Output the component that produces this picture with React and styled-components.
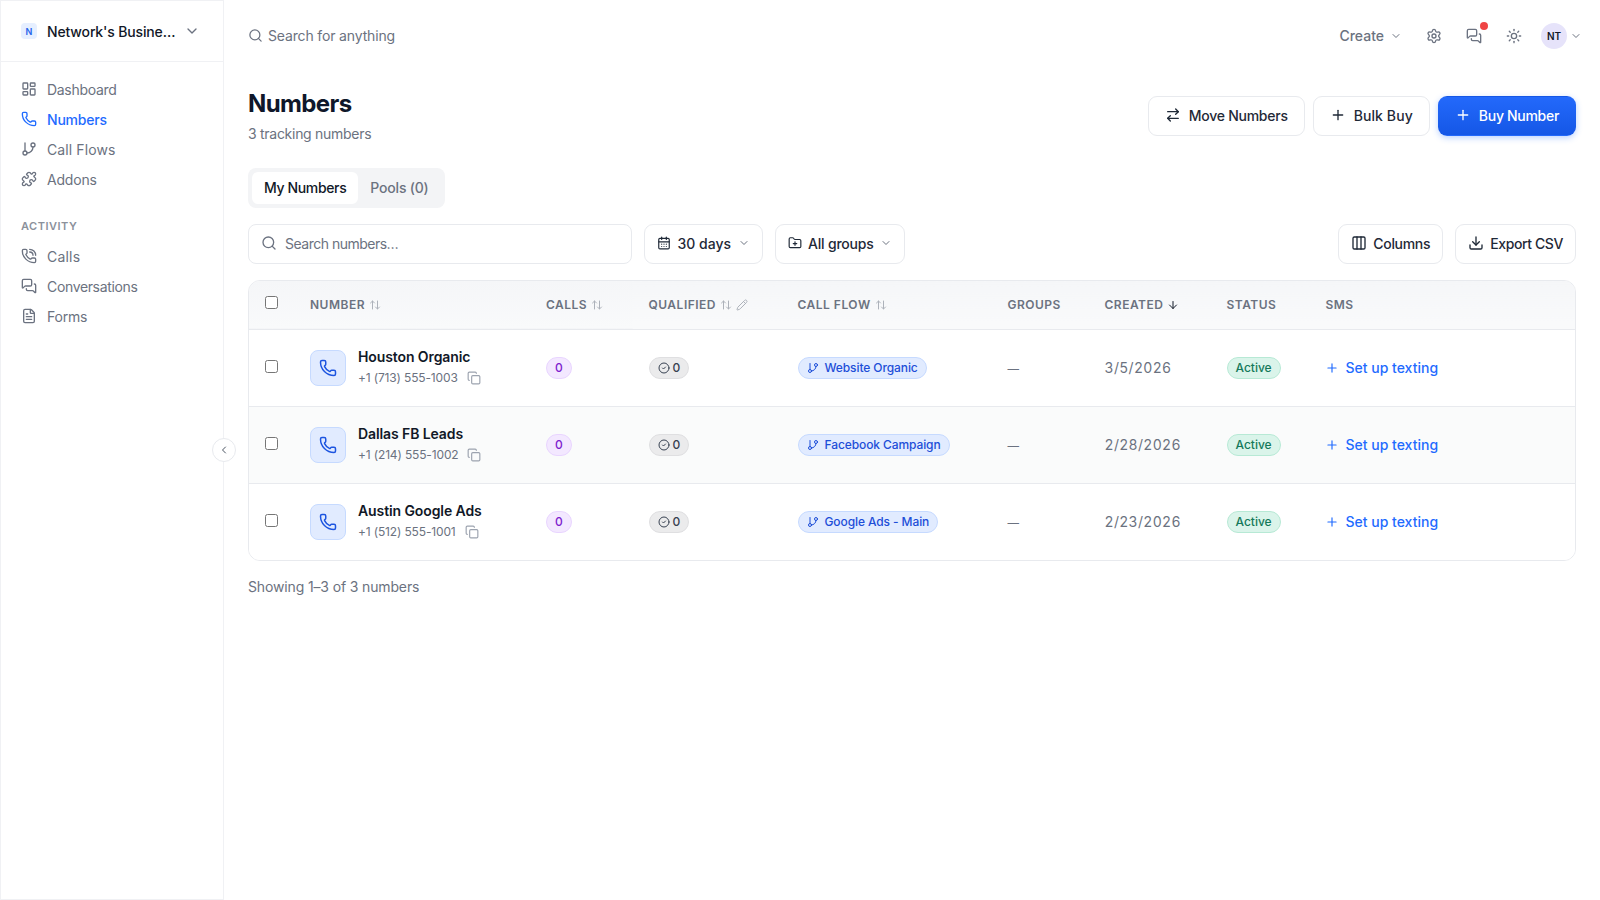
import React from "react";
import styled, { createGlobalStyle } from "styled-components";
import {
  LayoutDashboard, Phone, GitBranch, Puzzle, PhoneCall, MessagesSquare, FileText,
  Search, ChevronDown, ChevronLeft, Settings, Sun, ArrowRightLeft, Plus, CalendarDays,
  FolderPlus, Columns3, Download, ArrowUpDown, ArrowDown, Pencil, Copy, CircleCheck,
} from "lucide-react";

const Global = createGlobalStyle`
  * { box-sizing: border-box; }
  html, body { margin: 0; padding: 0; background: #fff; }
  body { font-family: Inter, "Liberation Sans", sans-serif; color: #111827; }
`;

const Shell = styled.div`
  display: flex;
  height: 900px;
  position: relative;
  overflow: hidden;
`;
const Sidebar = styled.aside`
  width: 224px;
  flex: none;
  border: 1px solid #f0f1f4;
  display: flex;
  flex-direction: column;
  position: relative;
`;
const Workspace = styled.div`
  height: 61px;
  flex: none;
  border-bottom: 1px solid #f0f1f4;
  display: flex;
  align-items: center;
  padding: 0 23px 0 20px;
  gap: 10px;
  color: #6b7280;
`;
const WorkspaceLogo = styled.span`
  width: 16px;
  height: 16px;
  border-radius: 4px;
  background: #e6efff;
  color: #2563eb;
  font-size: 9px;
  font-weight: 600;
  display: flex;
  align-items: center;
  justify-content: center;
  flex: none;
`;
const WorkspaceName = styled.span`
  flex: 1;
  min-width: 0;
  font-size: 14px;
  font-weight: 500;
  letter-spacing: -0.15px;
  color: #111827;
  white-space: nowrap;
`;
const NavGroup = styled.nav`
  display: flex;
  flex-direction: column;
  padding: ${(p) => p.$pad};
`;
const NavItem = styled.a`
  height: 30px;
  display: flex;
  align-items: center;
  gap: 10px;
  font-size: 14px;
  letter-spacing: ${(p) => p.$ls ?? -0.2}px;
  color: ${(p) => (p.$active ? "#1f6bff" : "#6b7280")};
  font-weight: ${(p) => (p.$active ? 500 : 400)};
`;
const NavHeading = styled.div`
  font-size: 11px;
  font-weight: 600;
  letter-spacing: 0.5px;
  color: #8b919b;
  height: 16px;
  line-height: 16px;
  padding: 0 20px;
  margin-top: 24px;
`;
const CollapseButton = styled.button`
  position: absolute;
  left: 211px;
  top: 437px;
  width: 24px;
  height: 24px;
  border-radius: 50%;
  background: #fff;
  border: 1px solid #e8eaee;
  padding: 0;
  display: flex;
  align-items: center;
  justify-content: center;
  color: #4b5563;
`;
const Main = styled.main`
  flex: 1;
  min-width: 0;
  display: flex;
  flex-direction: column;
`;
const Topbar = styled.header`
  height: 71px;
  flex: none;
  display: flex;
  align-items: center;
  justify-content: space-between;
  padding: 0 18px 0 24px;
`;
const GlobalSearch = styled.div`
  display: flex;
  align-items: center;
  gap: 5px;
  font-size: 14px;
  letter-spacing: -0.15px;
  color: #6b7280;
`;
const TopActions = styled.div`
  display: flex;
  align-items: center;
  color: #6b7280;
`;
const CreateMenu = styled.div`
  display: flex;
  align-items: center;
  gap: 6px;
  font-size: 14px;
  font-weight: 500;
  margin-right: 24px;
`;
const IconSlot = styled.span`
  width: 16px;
  height: 16px;
  display: flex;
  margin-right: ${(p) => p.$mr || 24}px;
  position: relative;
`;
const Dot = styled.span`
  position: absolute;
  top: -6px;
  right: -6px;
  width: 8px;
  height: 8px;
  border-radius: 50%;
  background: #ef4444;
`;
const Avatar = styled.span`
  width: 26px;
  height: 26px;
  border-radius: 50%;
  background: #e6e3fa;
  color: #111827;
  font-size: 10px;
  font-weight: 600;
  display: flex;
  align-items: center;
  justify-content: center;
  margin-right: 3px;
  margin-left: 4px;
`;
const Content = styled.div`
  padding: 17px 24px 0;
  display: flex;
  flex-direction: column;
`;
const PageHead = styled.div`
  display: flex;
  align-items: center;
  justify-content: space-between;
`;
const Title = styled.h1`
  margin: 0 0 4px;
  font-size: 24px;
  line-height: 32px;
  font-weight: 700;
  letter-spacing: -0.6px;
  color: #0f172a;
`;
const Subtitle = styled.p`
  margin: 0;
  font-size: 14px;
  line-height: 20px;
  letter-spacing: -0.28px;
  color: #6b7280;
`;
const ButtonRow = styled.div`
  display: flex;
  gap: 8px;
`;
const Button = styled.button`
  height: 40px;
  padding: 0 ${(p) => p.$px || 16}px 2px;
  border-radius: 9px;
  border: 1px solid ${(p) => (p.$primary ? "transparent" : "#e8eaee")};
  background: ${(p) => (p.$primary ? "linear-gradient(#2369fb, #1557e6)" : "#fff")};
  color: ${(p) => (p.$primary ? "#fff" : "#1f2937")};
  box-shadow: ${(p) => (p.$primary ? "0 2px 6px rgba(31,107,255,.3)" : "none")};
  font: 500 14px Inter, sans-serif;
  letter-spacing: ${(p) => p.$ls ?? -0.25}px;
  display: flex;
  align-items: center;
  gap: ${(p) => p.$gap || 8}px;
  white-space: nowrap;
`;
const Tabs = styled.div`
  margin-top: 24px;
  align-self: flex-start;
  height: 40px;
  padding: 4px;
  background: #f3f4f6;
  border-radius: 8px;
  display: flex;
`;
const Tab = styled.div`
  height: 32px;
  padding: 0 12px 2px;
  border-radius: 6px;
  display: flex;
  align-items: center;
  font-size: 14px;
  font-weight: 500;
  letter-spacing: ${(p) => (p.$active ? -0.36 : -0.2)}px;
  background: ${(p) => (p.$active ? "#fff" : "transparent")};
  color: ${(p) => (p.$active ? "#111827" : "#6b7280")};
`;
const Toolbar = styled.div`
  margin-top: 16px;
  display: flex;
  align-items: center;
  gap: 12px;
`;
const SearchBox = styled.div`
  width: 384px;
  height: 40px;
  border: 1px solid #e8eaee;
  border-radius: 8px;
  display: flex;
  align-items: center;
  gap: 8px;
  padding: 0 12px 2px;
  font-size: 14px;
  letter-spacing: -0.5px;
  color: #6b7280;
`;
const Spacer = styled.div`
  flex: 1;
`;
const Muted = styled.span`
  display: flex;
  color: #6b7280;
`;
const TableCard = styled.div`
  margin-top: 16px;
  border: 1px solid #e8eaee;
  border-radius: 12px;
  overflow: hidden;
`;
const Table = styled.table`
  width: 100%;
  border-collapse: collapse;
  table-layout: fixed;
`;
const HeadRow = styled.tr`
  height: 48px;
  background: linear-gradient(#f5f6f8, #f9fafb);
  border-bottom: 1px solid #e8eaee;
`;
const Th = styled.th`
  padding: 0 16px;
  text-align: left;
  font-size: 12px;
  font-weight: 600;
  letter-spacing: 0.5px;
  color: #6b7280;
  text-transform: uppercase;
  white-space: nowrap;
`;
const ThInner = styled.span`
  display: inline-flex;
  align-items: center;
  gap: 4px;
  vertical-align: baseline;
`;
const Row = styled.tr`
  height: 77px;
  background: ${(p) => (p.$alt ? "#fafbfb" : "#fff")};
  & + & { border-top: 1px solid #e8eaee; }
`;
const Td = styled.td`
  padding: 0 16px;
  font-size: 14px;
  color: #6b7280;
  white-space: nowrap;
`;
const Check = styled.input.attrs({ type: "checkbox" })`
  margin: 0 0 ${(p) => p.$lift}px;
  display: block;
  width: 13px;
  height: 13px;
`;
const NumberCell = styled.div`
  display: flex;
  align-items: center;
  gap: 12px;
`;
const PhoneTile = styled.span`
  width: 36px;
  height: 36px;
  border-radius: 8px;
  background: #e1ebff;
  border: 1px solid #c6daff;
  color: #1d55e0;
  display: flex;
  align-items: center;
  justify-content: center;
  flex: none;
`;
const NumberName = styled.div`
  font-size: 14px;
  line-height: 20px;
  font-weight: 600;
  letter-spacing: -0.1px;
  color: #111827;
`;
const NumberLine = styled.div`
  display: flex;
  align-items: center;
  gap: 9px;
  font-size: 12px;
  line-height: 20px;
  letter-spacing: -0.15px;
  color: #6b7280;
  margin-top: 1px;
`;
const Pill = styled.span`
  display: inline-flex;
  align-items: center;
  gap: ${(p) => p.$gap || 5}px;
  height: 22px;
  padding: 0 ${(p) => p.$px || 8}px;
  border-radius: 11px;
  font-size: 12px;
  font-weight: 500;
  letter-spacing: ${(p) => p.$ls || 0}px;
  background: ${(p) => p.$bg};
  border: 1px solid ${(p) => p.$bd};
  color: ${(p) => p.$fg};
  vertical-align: middle;
`;
const Dash = styled.span`
  font-size: 11.5px;
`;
const DateText = styled.span`
  font-variant-numeric: tabular-nums;
  letter-spacing: 0.3px;
`;
const SetupLink = styled.a`
  display: flex;
  align-items: center;
  gap: 7px;
  margin-left: -1px;
  font-size: 14px;
  font-weight: 500;
  color: #1f6bff;
`;
const Footer = styled.div`
  margin-top: 16px;
  font-size: 14px;
  line-height: 20px;
  letter-spacing: -0.14px;
  color: #6b7280;
`;

const SortIcon = () => <ArrowUpDown size={12} color="#adb2ba" />;

const rows = [
  { name: "Houston Organic", phone: "+1 (713) 555-1003", flow: "Website Organic", date: "3/5/2026" },
  { name: "Dallas FB Leads", phone: "+1 (214) 555-1002", flow: "Facebook Campaign", date: "2/28/2026", alt: true },
  { name: "Austin Google Ads", phone: "+1 (512) 555-1001", flow: "Google Ads - Main", date: "2/23/2026" },
];

export default function App() {
  return (
    <>
      <Global />
      <Shell>
        <Sidebar>
          <Workspace>
            <WorkspaceLogo>N</WorkspaceLogo>
            <WorkspaceName>Network's Busine…</WorkspaceName>
            <ChevronDown size={16} />
          </Workspace>
          <NavGroup $pad="12px 20px 0">
            <NavItem $ls={-0.3}><LayoutDashboard size={16} />Dashboard</NavItem>
            <NavItem $active><Phone size={16} />Numbers</NavItem>
            <NavItem $ls={0.1}><GitBranch size={16} />Call Flows</NavItem>
            <NavItem><Puzzle size={16} />Addons</NavItem>
          </NavGroup>
          <NavHeading>ACTIVITY</NavHeading>
          <NavGroup $pad="7px 20px 0">
            <NavItem $ls={0.2}><PhoneCall size={16} />Calls</NavItem>
            <NavItem $ls={-0.35}><MessagesSquare size={16} />Conversations</NavItem>
            <NavItem><FileText size={16} />Forms</NavItem>
          </NavGroup>
          <CollapseButton aria-label="Collapse"><ChevronLeft size={12} /></CollapseButton>
        </Sidebar>
        <Main>
          <Topbar>
            <GlobalSearch><Search size={15} />Search for anything</GlobalSearch>
            <TopActions>
              <CreateMenu>Create <ChevronDown size={12} /></CreateMenu>
              <IconSlot><Settings size={16} /></IconSlot>
              <IconSlot><MessagesSquare size={16} /><Dot /></IconSlot>
              <IconSlot $mr={15}><Sun size={16} /></IconSlot>
              <Avatar>NT</Avatar>
              <ChevronDown size={12} />
            </TopActions>
          </Topbar>
          <Content>
            <PageHead>
              <div>
                <Title>Numbers</Title>
                <Subtitle>3 tracking numbers</Subtitle>
              </div>
              <ButtonRow>
                <Button><ArrowRightLeft size={16} />Move Numbers</Button>
                <Button $ls={0.1}><Plus size={16} />Bulk Buy</Button>
                <Button $primary $ls={-0.3}><Plus size={16} />Buy Number</Button>
              </ButtonRow>
            </PageHead>
            <Tabs>
              <Tab $active>My Numbers</Tab>
              <Tab>Pools (0)</Tab>
            </Tabs>
            <Toolbar>
              <SearchBox><Search size={16} />Search numbers…</SearchBox>
              <Button $px={12} $gap={6.5} $ls={0}><CalendarDays size={14} />30 days<Muted as={ChevronDown} size={12} /></Button>
              <Button $px={12} $gap={6.5} $ls={-0.2}><FolderPlus size={14} />All groups<Muted as={ChevronDown} size={12} /></Button>
              <Spacer />
              <Button $px={12} $gap={6} $ls={-0.3}><Columns3 size={16} />Columns</Button>
              <Button $px={12} $gap={6} $ls={-0.4}><Download size={16} />Export CSV</Button>
            </Toolbar>
            <TableCard>
              <Table>
                <colgroup>
                  <col style={{ width: 45 }} />
                  <col style={{ width: 236 }} />
                  <col style={{ width: 102.5 }} />
                  <col style={{ width: 149 }} />
                  <col style={{ width: 210 }} />
                  <col style={{ width: 97 }} />
                  <col style={{ width: 122 }} />
                  <col style={{ width: 99 }} />
                  <col />
                </colgroup>
                <thead>
                  <HeadRow>
                    <Th><Check $lift={5} /></Th>
                    <Th><ThInner>Number <SortIcon /></ThInner></Th>
                    <Th><ThInner>Calls <SortIcon /></ThInner></Th>
                    <Th><ThInner>Qualified <SortIcon /><Pencil size={12} color="#adb2ba" /></ThInner></Th>
                    <Th><ThInner>Call Flow <SortIcon /></ThInner></Th>
                    <Th>Groups</Th>
                    <Th><ThInner>Created <ArrowDown size={12} color="#111827" /></ThInner></Th>
                    <Th>Status</Th>
                    <Th>SMS</Th>
                  </HeadRow>
                </thead>
                <tbody>
                  {rows.map((r) => (
                    <Row key={r.name} $alt={r.alt}>
                      <Td><Check $lift={2} /></Td>
                      <Td>
                        <NumberCell>
                          <PhoneTile><Phone size={18} /></PhoneTile>
                          <div>
                            <NumberName>{r.name}</NumberName>
                            <NumberLine>{r.phone}<Copy size={14} color="#9ca3af" /></NumberLine>
                          </div>
                        </NumberCell>
                      </Td>
                      <Td><Pill $bg="#f3e8ff" $bd="#e9d5ff" $fg="#7e22ce">0</Pill></Td>
                      <Td><Pill $bg="#ebebec" $bd="#dfdfe1" $fg="#374151" $gap={3} $px={8}><CircleCheck size={12} />0</Pill></Td>
                      <Td><Pill $bg="#e1ebff" $bd="#c6daff" $fg="#1d4ed8" $ls={-0.1} $gap={6}><GitBranch size={12} />{r.flow}</Pill></Td>
                      <Td><Dash>—</Dash></Td>
                      <Td><DateText>{r.date}</DateText></Td>
                      <Td><Pill $bg="#daf4ea" $bd="#b7e9d5" $fg="#15795a">Active</Pill></Td>
                      <Td><SetupLink><Plus size={14} />Set up texting</SetupLink></Td>
                    </Row>
                  ))}
                </tbody>
              </Table>
            </TableCard>
            <Footer>Showing 1–3 of 3 numbers</Footer>
          </Content>
        </Main>
      </Shell>
    </>
  );
}
